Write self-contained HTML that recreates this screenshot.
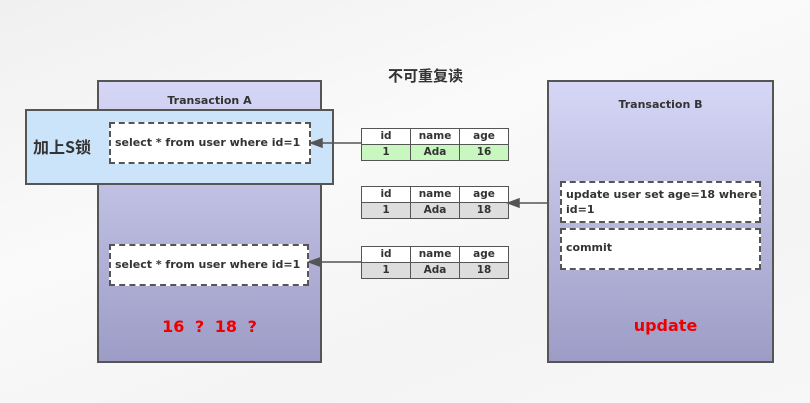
<!DOCTYPE html>
<html><head><meta charset="utf-8"><style>
*{margin:0;padding:0;box-sizing:border-box}
body{width:810px;height:403px;overflow:hidden;background:linear-gradient(160deg,#f0f0f0 0%,#fafafa 40%,#f4f4f4 70%,#f7f7f7 100%);font-family:"DejaVu Sans","Noto Sans CJK SC",sans-serif;position:relative;color:#333}
.a{position:absolute}
.tx{border:2px solid #555;background:linear-gradient(#d6d6f6,#9c9cc6)}
.ttl{font-weight:bold;font-size:11px;color:#333;text-align:center}
.dash{border:2px dashed #555;background:#fff;font-weight:bold;font-size:11px;color:#333;padding:0 0 0 4px;white-space:nowrap}
table{border-collapse:collapse;position:absolute;font-size:10.5px;font-weight:bold;color:#333}
td{border:1.5px solid #555;width:49px;height:16px;text-align:center;line-height:13px;background:#fff}
.g td{background:#ddd}
.gr td{background:#c8f8c0}
.red{color:#e00;font-weight:bold;font-size:16px;text-align:center;white-space:pre}
</style></head><body>
<div class="a" style="left:388px;top:65px;font-size:15px;font-weight:bold;color:#333;font-family:'Noto Sans CJK SC',sans-serif">不可重复读</div>

<div class="a tx" style="left:97px;top:80px;width:225px;height:283px"></div>
<div class="a ttl" style="left:97px;top:94px;width:225px">Transaction A</div>
<div class="a" style="left:25px;top:109px;width:309px;height:76px;background:#cce4fa;border:2px solid #555"></div>
<div class="a" style="left:33px;top:134px;font-size:16px;font-weight:bold;color:#333;font-family:'Noto Sans CJK SC',sans-serif">加上S锁</div>
<div class="a dash" style="left:109px;top:122px;width:202px;height:42px;line-height:38px">select * from user where id=1</div>
<div class="a dash" style="left:109px;top:244px;width:200px;height:42px;line-height:38px">select * from user where id=1</div>
<div class="a red" style="left:97px;top:317px;width:225px;word-spacing:5px">16 ? 18 ?</div>

<div class="a tx" style="left:547px;top:80px;width:227px;height:283px"></div>
<div class="a ttl" style="left:547px;top:98px;width:227px">Transaction B</div>
<div class="a dash" style="left:560px;top:181px;width:201px;height:42px;line-height:15px;padding-top:4px">update user set age=18 where<br>id=1</div>
<div class="a dash" style="left:560px;top:228px;width:201px;height:42px;line-height:36px">commit</div>
<div class="a red" style="left:547px;top:316px;width:237px">update</div>

<table style="left:361px;top:128px"><tr><td>id</td><td>name</td><td>age</td></tr><tr class="gr"><td>1</td><td>Ada</td><td>16</td></tr></table>
<table style="left:361px;top:186px"><tr><td>id</td><td>name</td><td>age</td></tr><tr class="g"><td>1</td><td>Ada</td><td>18</td></tr></table>
<table style="left:361px;top:246px"><tr><td>id</td><td>name</td><td>age</td></tr><tr class="g"><td>1</td><td>Ada</td><td>18</td></tr></table>

<svg class="a" style="left:0;top:0" width="810" height="403">
<g stroke="#555" stroke-width="1.5" fill="#555">
<line x1="361" y1="143" x2="318" y2="143"/><path d="M311 143 L322 139 L322 147Z"/>
<line x1="547" y1="203" x2="516" y2="203"/><path d="M508 203 L519 199 L519 207Z"/>
<line x1="361" y1="262" x2="316" y2="262"/><path d="M309 262 L320 258 L320 266Z"/>
</g></svg>
</body></html>
